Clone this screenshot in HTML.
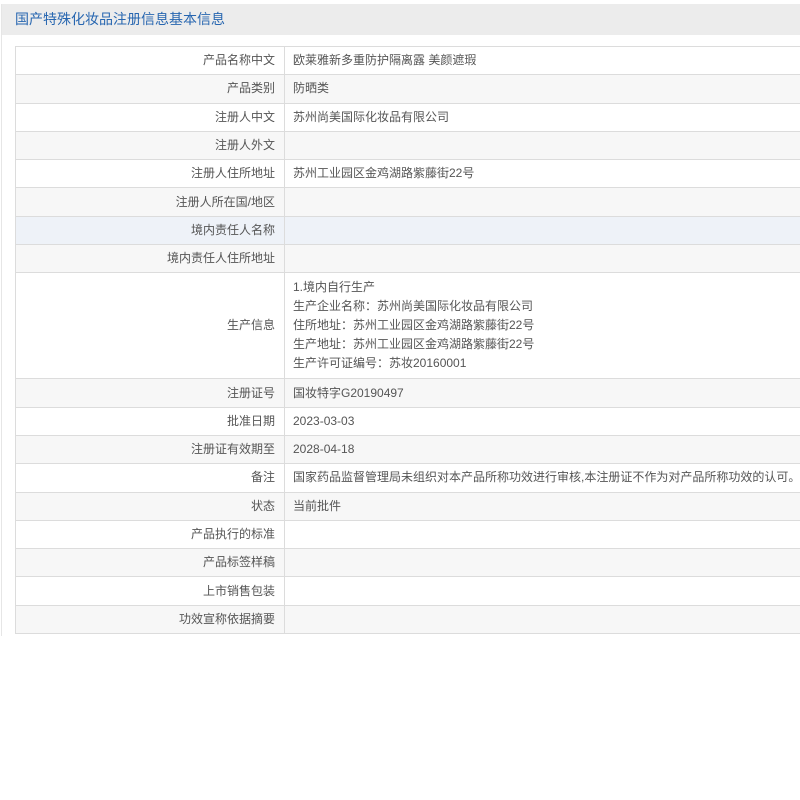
<!DOCTYPE html>
<html><head><meta charset="utf-8"><style>
html,body{margin:0;padding:0;background:#fff;width:800px;height:800px;overflow:hidden}
body{font-family:"Liberation Sans","Microsoft YaHei","Noto Sans CJK SC",sans-serif;font-size:12px;color:#555}
.wrap{position:absolute;left:1px;top:4px;width:820px;height:632px;border-left:1px solid #e6e6e6}
.hd{height:31px;background:#ececec;color:#2766b0;font-size:14px;line-height:31px;padding-left:13px;font-family:"Liberation Sans","Noto Sans CJK SC",sans-serif}
table{position:absolute;left:13px;top:42px;width:800px;border-collapse:collapse}
td{border:1px solid #dcdcdc;height:27.3px;padding:0 8px;line-height:19px;vertical-align:middle}
td.l{width:251px;text-align:right;padding-right:9px}
tr:nth-child(even) td{background:#f7f7f7}
tr.h td{background:#eef2f8}
td.m{padding-top:5px;padding-bottom:5px}
</style></head><body>
<div class="wrap">
<div class="hd">国产特殊化妆品注册信息基本信息</div>
<table>
<tr><td class="l">产品名称中文</td><td>欧莱雅新多重防护隔离露 美颜遮瑕</td></tr>
<tr><td class="l">产品类别</td><td>防晒类</td></tr>
<tr><td class="l">注册人中文</td><td>苏州尚美国际化妆品有限公司</td></tr>
<tr><td class="l">注册人外文</td><td></td></tr>
<tr><td class="l">注册人住所地址</td><td>苏州工业园区金鸡湖路紫藤街22号</td></tr>
<tr><td class="l">注册人所在国/地区</td><td></td></tr>
<tr class="h"><td class="l">境内责任人名称</td><td></td></tr>
<tr><td class="l">境内责任人住所地址</td><td></td></tr>
<tr><td class="l">生产信息</td><td class="m">1.境内自行生产<br>生产企业名称：苏州尚美国际化妆品有限公司<br>住所地址：苏州工业园区金鸡湖路紫藤街22号<br>生产地址：苏州工业园区金鸡湖路紫藤街22号<br>生产许可证编号：苏妆20160001</td></tr>
<tr><td class="l">注册证号</td><td>国妆特字G20190497</td></tr>
<tr><td class="l">批准日期</td><td>2023-03-03</td></tr>
<tr><td class="l">注册证有效期至</td><td>2028-04-18</td></tr>
<tr><td class="l">备注</td><td>国家药品监督管理局未组织对本产品所称功效进行审核,本注册证不作为对产品所称功效的认可。</td></tr>
<tr><td class="l">状态</td><td>当前批件</td></tr>
<tr><td class="l">产品执行的标准</td><td></td></tr>
<tr><td class="l">产品标签样稿</td><td></td></tr>
<tr><td class="l">上市销售包装</td><td></td></tr>
<tr><td class="l">功效宣称依据摘要</td><td></td></tr>
</table>
</div>
</body></html>
